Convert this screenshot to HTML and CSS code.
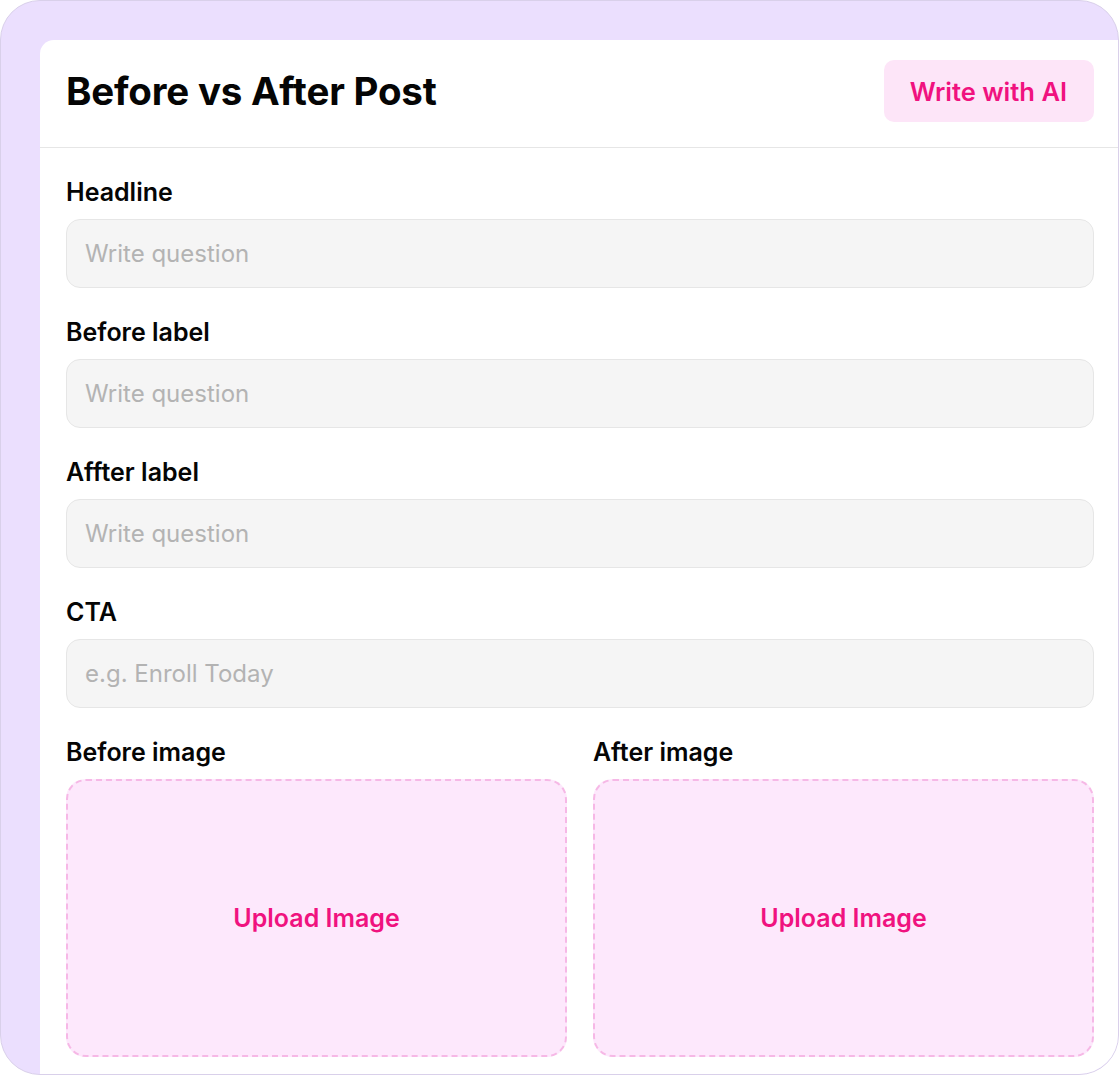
FILE: index.html
```html
<!DOCTYPE html>
<html lang="en">
<head>
    <meta charset="UTF-8">
    <meta name="viewport" content="width=device-width, initial-scale=1.0">
    <title>Before vs After Post</title>
    <link rel="stylesheet" href="styles.css">
</head>
<body>
    <div class="frame">
        <div class="panel">
            <!-- header -->
            <div class="panel-header">
                <h1>Before vs After Post</h1>
                <button class="ai-button" type="button">Write with AI</button>
            </div>
            <!-- form -->
            <form class="post-form">
                <label class="field">
                    <span class="field-label">Headline</span>
                    <input type="text" placeholder="Write question">
                </label>
                <label class="field">
                    <span class="field-label">Before label</span>
                    <input type="text" placeholder="Write question">
                </label>
                <label class="field">
                    <span class="field-label">Affter label</span>
                    <input type="text" placeholder="Write question">
                </label>
                <label class="field">
                    <span class="field-label">CTA</span>
                    <input type="text" placeholder="e.g. Enroll Today">
                </label>
                <div class="image-row">
                    <div class="field">
                        <span class="field-label">Before image</span>
                        <div class="upload-box">Upload Image</div>
                    </div>
                    <div class="field">
                        <span class="field-label">After image</span>
                        <div class="upload-box">Upload Image</div>
                    </div>
                </div>
            </form>
        </div>
    </div>
</body>
</html>
```

FILE: styles.css
```css
:root {
    --frame-bg: #ebdffe;
    --frame-border: #d9d0ea;
    --accent: #f0127f;
    --accent-soft: #fde5f8;
    --text-color: #050505;
    --input-bg: #f5f5f5;
    --input-border: #e6e6e6;
    --placeholder: #b3b3b3;
}
* {
    box-sizing: border-box;
}
body {
    margin: 0;
    font-family: Inter, 'Noto Sans', sans-serif;
    color: var(--text-color);
    background: #ffffff;
}
.frame {
    width: 1119px;
    height: 1075px;
    background-color: var(--frame-bg);
    border: 1px solid var(--frame-border);
    border-radius: 40px;
    overflow: hidden;
    padding: 39px 0 0 39px;
}
.panel {
    height: 100%;
    background: #ffffff;
    border-top-left-radius: 14px;
}
.panel-header {
    height: 108px;
    display: flex;
    align-items: center;
    justify-content: space-between;
    padding: 0 24px 5px 26px;
    border-bottom: 1px solid #e6e6e6;
}
.panel-header h1 {
    margin: 0;
    font-size: 38.5px;
    font-weight: 700;
    letter-spacing: -0.2px;
}
.ai-button {
    height: 62px;
    padding: 0 27px 0 26px;
    border: none;
    border-radius: 10px;
    background-color: var(--accent-soft);
    color: var(--accent);
    font-family: inherit;
    font-size: 25.5px;
    font-weight: 600;
    cursor: pointer;
}
.post-form {
    padding: 30px 24px 0 26px;
    display: flex;
    flex-direction: column;
    gap: 30px;
}
.field {
    display: flex;
    flex-direction: column;
    gap: 13px;
}
.field-label {
    font-size: 25px;
    font-weight: 600;
    line-height: 28px;
}
.field input {
    height: 69px;
    padding: 0 18px;
    background-color: var(--input-bg);
    border: 1px solid var(--input-border);
    border-radius: 14px;
    font-family: inherit;
    font-size: 24px;
    color: var(--text-color);
}
.field input::placeholder {
    color: var(--placeholder);
}
.field input:focus {
    outline: none;
    border-color: var(--accent);
}
.image-row {
    display: grid;
    grid-template-columns: 1fr 1fr;
    gap: 26px;
}
.upload-box {
    height: 278px;
    display: flex;
    align-items: center;
    justify-content: center;
    background-color: #fde8fc;
    border: 2px dashed #f6b8e6;
    border-radius: 20px;
    color: var(--accent);
    font-size: 25px;
    font-weight: 600;
    cursor: pointer;
}
```
